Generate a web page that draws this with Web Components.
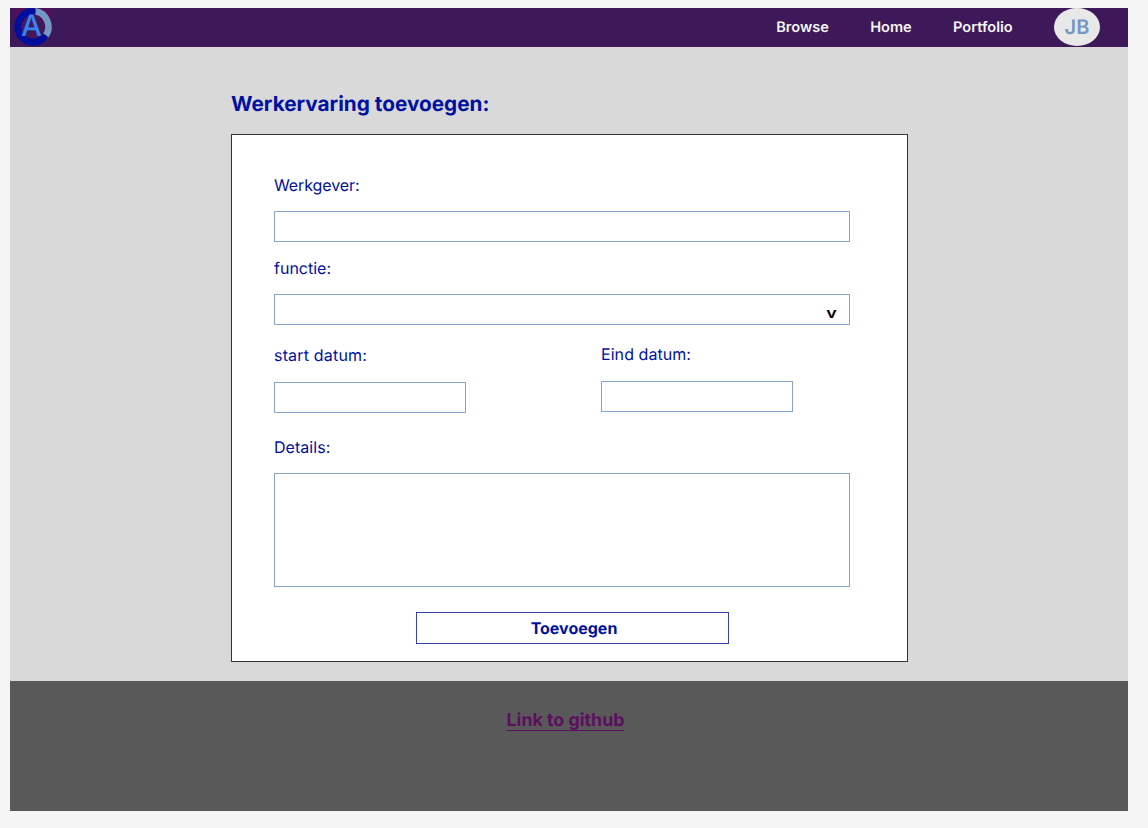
<!DOCTYPE html>
<html lang="nl">
<head>
<meta charset="utf-8">
<title>Werkervaring toevoegen</title>
<style>
html,body{margin:0;height:100%}
body{background:#f5f5f5;font-family:Inter,"Liberation Sans",sans-serif;color:#00119e;overflow:hidden;text-rendering:geometricPrecision}
</style>
</head>
<body>
<portfolio-page></portfolio-page>
<script>
const define=(name,html)=>{
  const t=document.createElement('template');
  t.innerHTML=html;
  customElements.define(name,class extends HTMLElement{
    constructor(){super();this.attachShadow({mode:'open'}).append(t.content.cloneNode(true));}
  });
};

define('brand-logo',`
<style>:host{display:block;width:38px;height:38px}svg{display:block;overflow:visible}text{font:500 29.5px Inter,sans-serif}</style>
<svg width="38" height="38" viewBox="0 0 38 38" aria-label="Logo">
  <rect x="0" y="0.5" width="37.5" height="10" fill="#530f5c"/>
  <circle cx="18.5" cy="19" r="13" fill="#43185b"/>
  <path d="M21.2 3.3A15.8 15.8 0 0 1 31.9 27.5" fill="none" stroke="#7597c4" stroke-width="6.6"/>
  <path d="M18.2 3.6A15.3 15.3 0 1 0 29.6 30" fill="none" stroke="#000e9b" stroke-width="7" stroke-linecap="round"/>
  <text x="17.4" y="27.8" text-anchor="middle" fill="#3683f4">A</text>
</svg>`);

define('nav-link',`
<style>:host{display:block}a{display:block;color:#f5f5f5;text-decoration:none;font-size:14.6px;font-weight:600;line-height:20px;white-space:nowrap}</style>
<a><slot></slot></a>`);

define('user-avatar',`
<style>:host{display:flex;align-items:center;justify-content:center;width:46px;height:38px;border-radius:50%;background:#e8e8e8;color:#7597c4;font-size:20px;font-weight:600;line-height:38px}</style>
<slot></slot>`);

define('site-header',`
<style>:host{display:flex;box-sizing:border-box;height:39px;background:#3d1959;padding:0 28px 0 4px;align-items:flex-start;justify-content:space-between}
nav{display:flex;align-items:center;height:38px;gap:41.3px}</style>
<brand-logo></brand-logo>
<nav><nav-link>Browse</nav-link><nav-link>Home</nav-link><nav-link>Portfolio</nav-link><user-avatar>JB</user-avatar></nav>`);

define('form-field',`
<style>:host{display:block;width:var(--field-width,576px)}
label{display:block;font-size:16px;line-height:20px;white-space:nowrap;letter-spacing:var(--label-spacing,0)}
.box{box-sizing:border-box;height:var(--field-height,31px);margin-top:var(--label-gap,16px);border:1px solid #86a5cd;background:#fff;display:flex;align-items:center;justify-content:flex-end;padding:4px 13px 0 0;color:#000;font-size:16px;font-weight:600;line-height:20px}
::slotted([slot=indicator]){display:block;transform:scale(1.12,.92);transform-origin:60% 60%}</style>
<label><slot></slot></label><div class="box"><slot name="indicator"></slot></div>`);

define('submit-button',`
<style>:host{display:block;width:313px}button{display:block;box-sizing:border-box;width:100%;height:32px;border:1px solid #3440b3;background:#fff;padding:0 0 0 3px;font:700 16px/30px Inter,sans-serif;color:#00119e;text-rendering:inherit}</style>
<button type="button"><slot></slot></button>`);

define('experience-form',`
<style>:host{display:block;box-sizing:border-box;width:677px;height:528px;border:1px solid #333;background:#fff;padding:40px 57px 0 42px}
.employer{--label-spacing:-.1px}
.functie{margin-top:16px}
.dates{display:flex;gap:135px;margin-top:19px;--field-width:192px;--label-gap:17px}
.start{margin-top:1px;--label-spacing:.18px}
.end{--label-spacing:.06px}
.details{margin-top:24px;--field-height:114px;--label-spacing:.05px}
submit-button{margin:25px 0 0 142px}</style>
<form-field class="employer">Werkgever:</form-field>
<form-field class="functie">functie:<span slot="indicator">v</span></form-field>
<div class="dates"><form-field class="start">start datum:</form-field><form-field class="end">Eind datum:</form-field></div>
<form-field class="details">Details:</form-field>
<submit-button>Toevoegen</submit-button>`);

define('site-footer',`
<style>:host{display:block;box-sizing:border-box;height:130px;background:#595959;padding:28px 7px 0 0;text-align:center}
a{font-size:17.8px;font-weight:700;line-height:24px;color:#5c0f60;text-decoration:underline;text-decoration-thickness:1px;text-underline-offset:4px;text-decoration-skip-ink:none}</style>
<a><slot></slot></a>`);

define('portfolio-page',`
<style>:host{display:block;box-sizing:border-box;padding:8px 20px 0 10px}
main{box-sizing:border-box;height:634px;background:#d9d9d9;padding:44px 0 0 221px}
h1{margin:0 0 15px;font-size:20.75px;font-weight:700;line-height:28px;white-space:nowrap}</style>
<site-header></site-header>
<main><h1>Werkervaring toevoegen:</h1><experience-form></experience-form></main>
<site-footer>Link to github</site-footer>`);
</script>
</body>
</html>
